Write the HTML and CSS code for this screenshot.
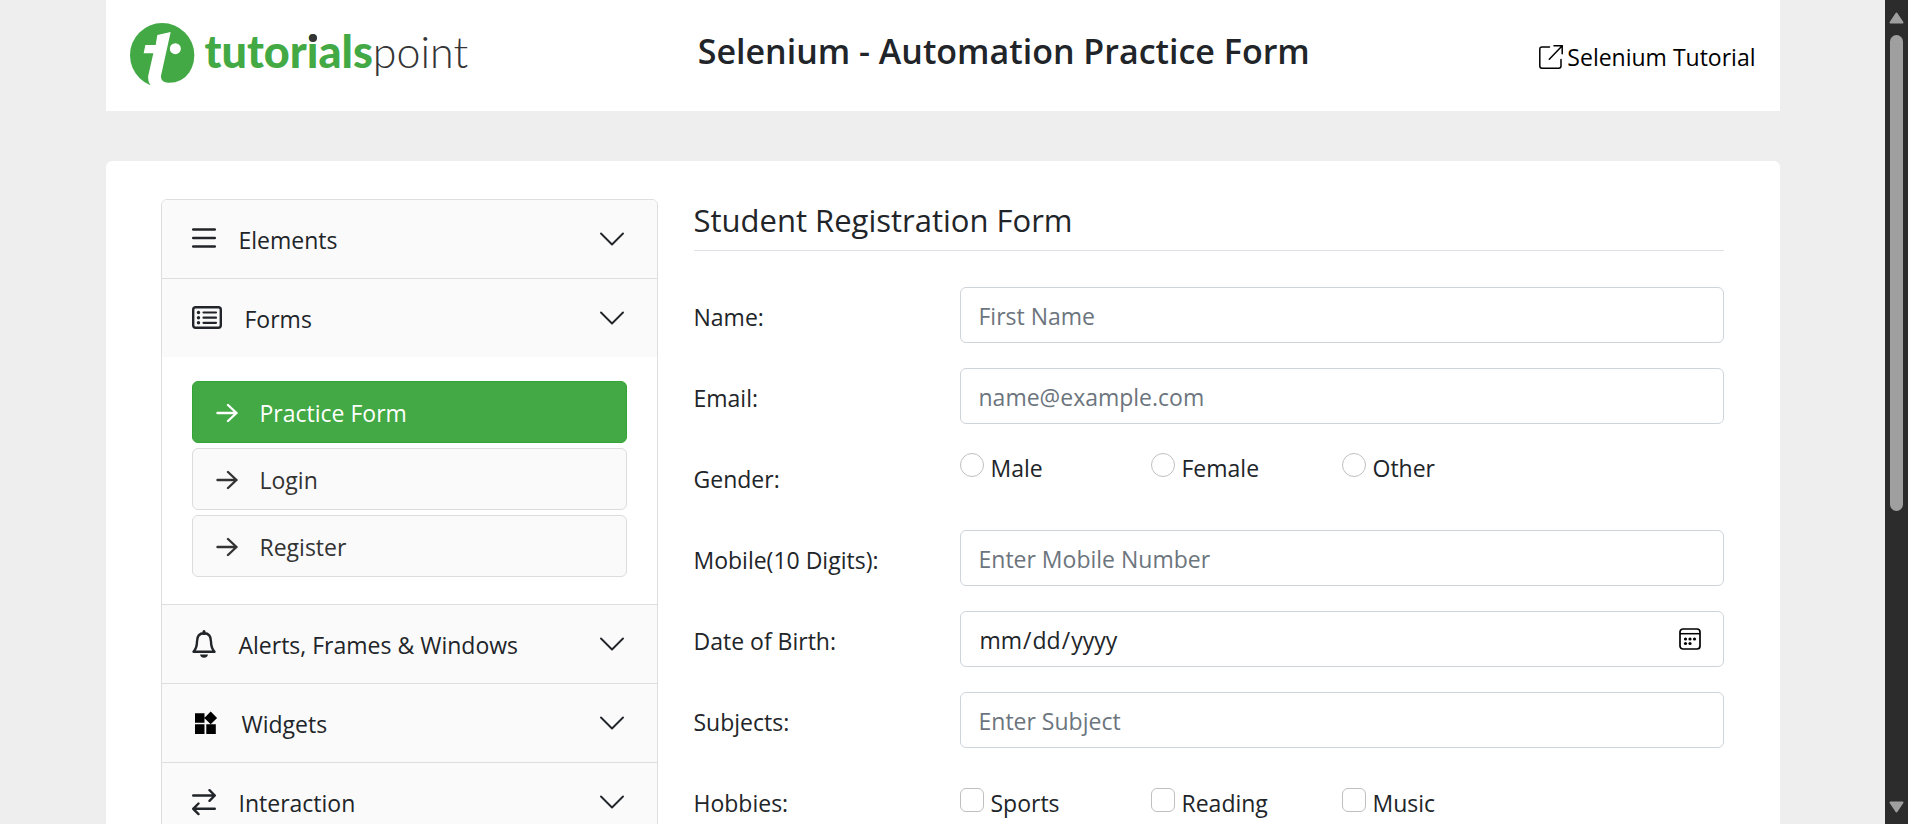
FILE: index.html
```html
<!DOCTYPE html>
<html lang="en">
<head>
<meta charset="utf-8">
<title>Selenium Practice - Student Registration Form</title>
<link rel="stylesheet" href="styles.css">
</head>
<body>
<svg class="sprite" aria-hidden="true">
  <symbol id="chevron" viewBox="0 0 24 24"><path d="M1 6.500l11 11L23 6.500" fill="none" stroke="currentColor" stroke-width="1.900" stroke-linecap="round" stroke-linejoin="round"/></symbol>
  <symbol id="arrow" viewBox="0 0 22 22"><path d="M1.500 11h19M12 3L20.500 11l-8.500 8" fill="none" stroke="currentColor" stroke-width="2.400" stroke-linecap="round" stroke-linejoin="round"/></symbol>
</svg>
<div class="window">
  <div class="page">
    <header class="header">
      <a class="logo" href="#">
        <svg class="logo-mark" viewBox="90 71 195 195" aria-hidden="true">
          <circle cx="186.500" cy="167.500" r="96.500" fill="#42a944"/>
          <path fill="#fff" d="M172 107L212 98L184 225Q178 248 205 250Q245 251 268 220L292 272H152V259Q142 246 145 228L160 162H131L136 137H167Z"/>
          <circle cx="226" cy="148" r="16.500" fill="#fff"/>
        </svg>
        <span class="wordmark"><b>tutor<span class="dotted">i</span>als</b>point</span>
      </a>
      <h1 class="title">Selenium - Automation Practice Form</h1>
      <a class="tutorial" href="#">
        <svg class="icon" viewBox="0 0 24 24" aria-hidden="true"><g fill="none" stroke="currentColor" stroke-width="1.500" stroke-linecap="round"><path d="M10.500 2H3Q.8 2 .8 4.200V21q0 2.200 2.200 2.200H19.700q2.300 0 2.300-2.200V14.500"/><path d="M15 .8H23.200V8.800M23 1L10.300 14.200"/></g></svg>
        <span>Selenium Tutorial</span>
      </a>
    </header>

    <main class="main">
      <nav class="accordion" aria-label="Sections">
        <button class="section" type="button">
          <svg class="icon" viewBox="0 0 24 24" aria-hidden="true"><path d="M1.200 2.500h21.600M1.200 11h21.600M1.200 19.500h21.600" stroke="currentColor" stroke-width="2.500" stroke-linecap="round"/></svg>
          <span class="section-name">Elements</span>
          <svg class="icon" aria-hidden="true"><use href="#chevron"/></svg>
        </button>
        <button class="section" type="button" aria-expanded="true">
          <svg class="icon icon-wide" viewBox="0 0 30 24" aria-hidden="true"><rect x="1.200" y="1.200" width="27.600" height="20.600" rx="2.500" fill="none" stroke="currentColor" stroke-width="2.400"/><path d="M11.500 6.500h12.500M11.500 11.700h12.500M11.500 16.800h12.500" stroke="currentColor" stroke-width="2.200" stroke-linecap="round"/><g fill="currentColor"><circle cx="6.500" cy="6.500" r="1.700"/><circle cx="6.500" cy="11.700" r="1.700"/><circle cx="6.500" cy="16.800" r="1.700"/></g></svg>
          <span class="section-name">Forms</span>
          <svg class="icon" aria-hidden="true"><use href="#chevron"/></svg>
        </button>
        <div class="panel">
          <a class="item item-active" href="#"><svg class="item-icon" aria-hidden="true"><use href="#arrow"/></svg>Practice Form</a>
          <a class="item" href="#"><svg class="item-icon" aria-hidden="true"><use href="#arrow"/></svg>Login</a>
          <a class="item" href="#"><svg class="item-icon" aria-hidden="true"><use href="#arrow"/></svg>Register</a>
        </div>
        <button class="section" type="button">
          <svg class="icon icon-tall" viewBox="0 0 24 28" aria-hidden="true"><path d="M12 3.200C7 3.200 5 7 5 11.500C5 16 3.500 19.500 1.500 21.700H22.500C20.500 19.500 19 16 19 11.500C19 7 17 3.200 12 3.200Z" fill="none" stroke="currentColor" stroke-width="2.400" stroke-linejoin="round"/><path d="M12 1.500V3.500" stroke="currentColor" stroke-width="3" stroke-linecap="round"/><path d="M8 24.500h8q-.8 3.300-4 3.300t-4-3.300z" fill="currentColor"/></svg>
          <span class="section-name">Alerts, Frames &amp; Windows</span>
          <svg class="icon" aria-hidden="true"><use href="#chevron"/></svg>
        </button>
        <button class="section" type="button">
          <svg class="icon icon-widget" viewBox="0 0 27 24" aria-hidden="true"><path fill="#000" d="M3 2.200h9.500v9.500H3zM3 13.300h9.500V23H3zM14.300 13.300h9.500V23h-9.500zM18.700.5l6.400 6.400-6.400 6.400-6.400-6.400z"/></svg>
          <span class="section-name">Widgets</span>
          <svg class="icon" aria-hidden="true"><use href="#chevron"/></svg>
        </button>
        <button class="section" type="button">
          <svg class="icon icon-tall" viewBox="0 0 24 28" aria-hidden="true"><path d="M1.200 7.500h21.600M17.500 2.200L22.800 7.500l-5.300 5.300M22.800 20.800H1.200M6.500 15.500L1.200 20.800l5.300 5.300" fill="none" stroke="currentColor" stroke-width="2.400" stroke-linecap="round" stroke-linejoin="round"/></svg>
          <span class="section-name">Interaction</span>
          <svg class="icon" aria-hidden="true"><use href="#chevron"/></svg>
        </button>
      </nav>

      <form class="form">
        <h2 class="form-title">Student Registration Form</h2>
        <div class="row">
          <label class="label" for="name">Name:</label>
          <input class="field" id="name" type="text" placeholder="First Name">
        </div>
        <div class="row">
          <label class="label" for="email">Email:</label>
          <input class="field" id="email" type="email" placeholder="name@example.com">
        </div>
        <div class="row" role="radiogroup" aria-labelledby="gender">
          <span class="label" id="gender">Gender:</span>
          <div class="choices">
            <label class="choice"><input class="tick radio" type="radio" name="gender">Male</label>
            <label class="choice"><input class="tick radio" type="radio" name="gender">Female</label>
            <label class="choice"><input class="tick radio" type="radio" name="gender">Other</label>
          </div>
        </div>
        <div class="row">
          <label class="label" for="mobile">Mobile(10 Digits):</label>
          <input class="field" id="mobile" type="text" placeholder="Enter Mobile Number">
        </div>
        <div class="row">
          <label class="label" for="dob">Date of Birth:</label>
          <div class="date">
            <input class="field" id="dob" type="date">
            <svg class="calendar" viewBox="0 0 22 22" aria-hidden="true"><rect x="1" y="1" width="20" height="20" rx="3" fill="none" stroke="#000" stroke-width="1.700"/><path d="M1 5.700h20" stroke="#000" stroke-width="1.500"/><circle cx="6.500" cy="11" r="1.600"/><circle cx="11" cy="11" r="1.600"/><circle cx="15.500" cy="11" r="1.600"/><circle cx="6.500" cy="15.500" r="1.600"/><circle cx="11" cy="15.500" r="1.600"/></svg>
          </div>
        </div>
        <div class="row">
          <label class="label" for="subjects">Subjects:</label>
          <input class="field" id="subjects" type="text" placeholder="Enter Subject">
        </div>
        <div class="row" role="group" aria-labelledby="hobbies">
          <span class="label" id="hobbies">Hobbies:</span>
          <div class="choices choices-low">
            <label class="choice"><input class="tick" type="checkbox">Sports</label>
            <label class="choice"><input class="tick" type="checkbox">Reading</label>
            <label class="choice"><input class="tick" type="checkbox">Music</label>
          </div>
        </div>
      </form>
    </main>
  </div>
  <div class="scrollbar" aria-hidden="true">
    <svg class="scroll-arrow" viewBox="0 0 15 12"><path d="M7.500 1.500L13.500 10.500H1.500Z" fill="#9f9f9f" stroke="#9f9f9f" stroke-width="2" stroke-linejoin="round"/></svg>
    <div class="track"><div class="thumb"></div></div>
    <svg class="scroll-arrow" viewBox="0 0 15 12"><path d="M7.500 10.500L1.500 1.500H13.500Z" fill="#9f9f9f" stroke="#9f9f9f" stroke-width="2" stroke-linejoin="round"/></svg>
  </div>
</div>
</body>
</html>
```
FILE: styles.css
```css
* { box-sizing: border-box; }

body {
  margin: 0;
  background: #eee;
  color: #212529;
  font: 23px/36px "Open Sans", "Noto Sans", sans-serif;
}

button, input { font: inherit; color: inherit; }
a { color: inherit; text-decoration: none; }
.sprite { display: none; }

.window { display: flex; height: 100vh; }
.page { flex: 1; overflow: hidden; }

/* Header */
.header {
  display: grid;
  grid-template-columns: auto 1fr auto;
  align-items: center;
  max-width: 1674px;
  min-height: 111px;
  margin: 0 auto 50px;
  padding: 0 24px;
  background: #fff;
}
.logo { display: flex; align-items: center; gap: 10px; }
.logo-mark { width: 65px; height: 65px; }
.wordmark {
  padding-bottom: 8px;
  color: #343436;
  font-family: Lato, sans-serif;
  font-size: 43px;
  font-weight: 300;
  line-height: 60px;
}
.wordmark b { color: #42a944; font-size: 45px; font-weight: 900; }
.dotted { position: relative; }
.dotted::after {
  content: "";
  position: absolute;
  top: 10px;
  left: 2px;
  width: 8px;
  height: 8px;
  border-radius: 50%;
  background: #343436;
}
.title {
  margin: 0;
  padding-bottom: 10px;
  font-size: 34px;
  font-weight: 600;
  line-height: 44px;
  text-align: center;
}
.tutorial {
  display: flex;
  align-items: center;
  gap: 4px;
  padding-top: 2px;
  color: #000;
}

/* Main card */
.main {
  display: grid;
  grid-template-columns: 497fr 1030fr;
  gap: 36px;
  align-items: start;
  max-width: 1674px;
  margin: 0 auto;
  padding: 38px 56px 48px 55px;
  border-radius: 6px 6px 0 0;
  background: #fff;
}

.icon { flex: none; width: 24px; height: 24px; }
.icon-wide { width: 30px; }
.icon-tall { height: 28px; }
.icon-widget { width: 27px; }

/* Accordion */
.accordion {
  overflow: hidden;
  border: 1px solid #dedede;
  border-radius: 6px;
}
.section {
  display: flex;
  align-items: center;
  gap: 23px;
  width: 100%;
  height: 79px;
  padding: 0 33px 0 30px;
  border: 0;
  border-top: 1px solid #dedede;
  background: #fafafa;
  text-align: left;
}
.section:first-child { height: 78px; border-top: 0; }
.section-name { flex: 1; padding-top: 2px; }
.panel {
  display: flex;
  flex-direction: column;
  gap: 5px;
  padding: 24px 30px 27px;
}
.item {
  display: flex;
  align-items: center;
  gap: 22px;
  height: 62px;
  padding: 2px 23px 0;
  border: 1px solid #dcdcdc;
  border-radius: 6px;
  background: #fafafa;
  color: #333;
}
.item-active { border-color: #34a336; background: #42a944; color: #fff; }
.item-icon { width: 22px; height: 22px; }

/* Form */
.form { display: flex; flex-direction: column; gap: 25px; }
.form-title {
  margin: 0 0 11px;
  padding-bottom: 8px;
  border-bottom: 1px solid #dee2e6;
  font-size: 31px;
  font-weight: 400;
  line-height: 43px;
}
.row {
  display: grid;
  grid-template-columns: 266fr 764fr;
  min-height: 56px;
}
.label { padding-top: 12px; }
.field {
  width: 100%;
  height: 56px;
  padding: 2px 18px 0;
  border: 1px solid #ced4da;
  border-radius: 6px;
  background: #fff;
}
.field::placeholder { color: #6c757d; opacity: 1; }
.date { position: relative; }
.date .field::-webkit-calendar-picker-indicator { opacity: 0; }
.calendar {
  position: absolute;
  top: 17px;
  right: 23px;
  width: 22px;
  height: 22px;
  pointer-events: none;
}
.choices {
  display: grid;
  grid-template-columns: repeat(4, 1fr);
  align-items: start;
  padding-top: 2px;
}
.choices-low { padding-top: 13px; }
.choice { display: flex; gap: 7px; line-height: 34px; }
.tick {
  appearance: none;
  flex: none;
  width: 24px;
  height: 24px;
  margin: 2px 0 0;
  border: 1px solid #bfbfbf;
  border-radius: 6px;
  background: #fff;
}
.radio { border-radius: 50%; }

/* Scrollbar */
.scrollbar {
  display: flex;
  flex: none;
  flex-direction: column;
  align-items: center;
  gap: 11px;
  width: 23px;
  padding: 12px 0 11px;
  background: #2c2c2c;
}
.scroll-arrow { width: 15px; height: 12px; }
.track { flex: 1; width: 13px; }
.thumb { height: 63%; border-radius: 7px; background: #9f9f9f; }
```
